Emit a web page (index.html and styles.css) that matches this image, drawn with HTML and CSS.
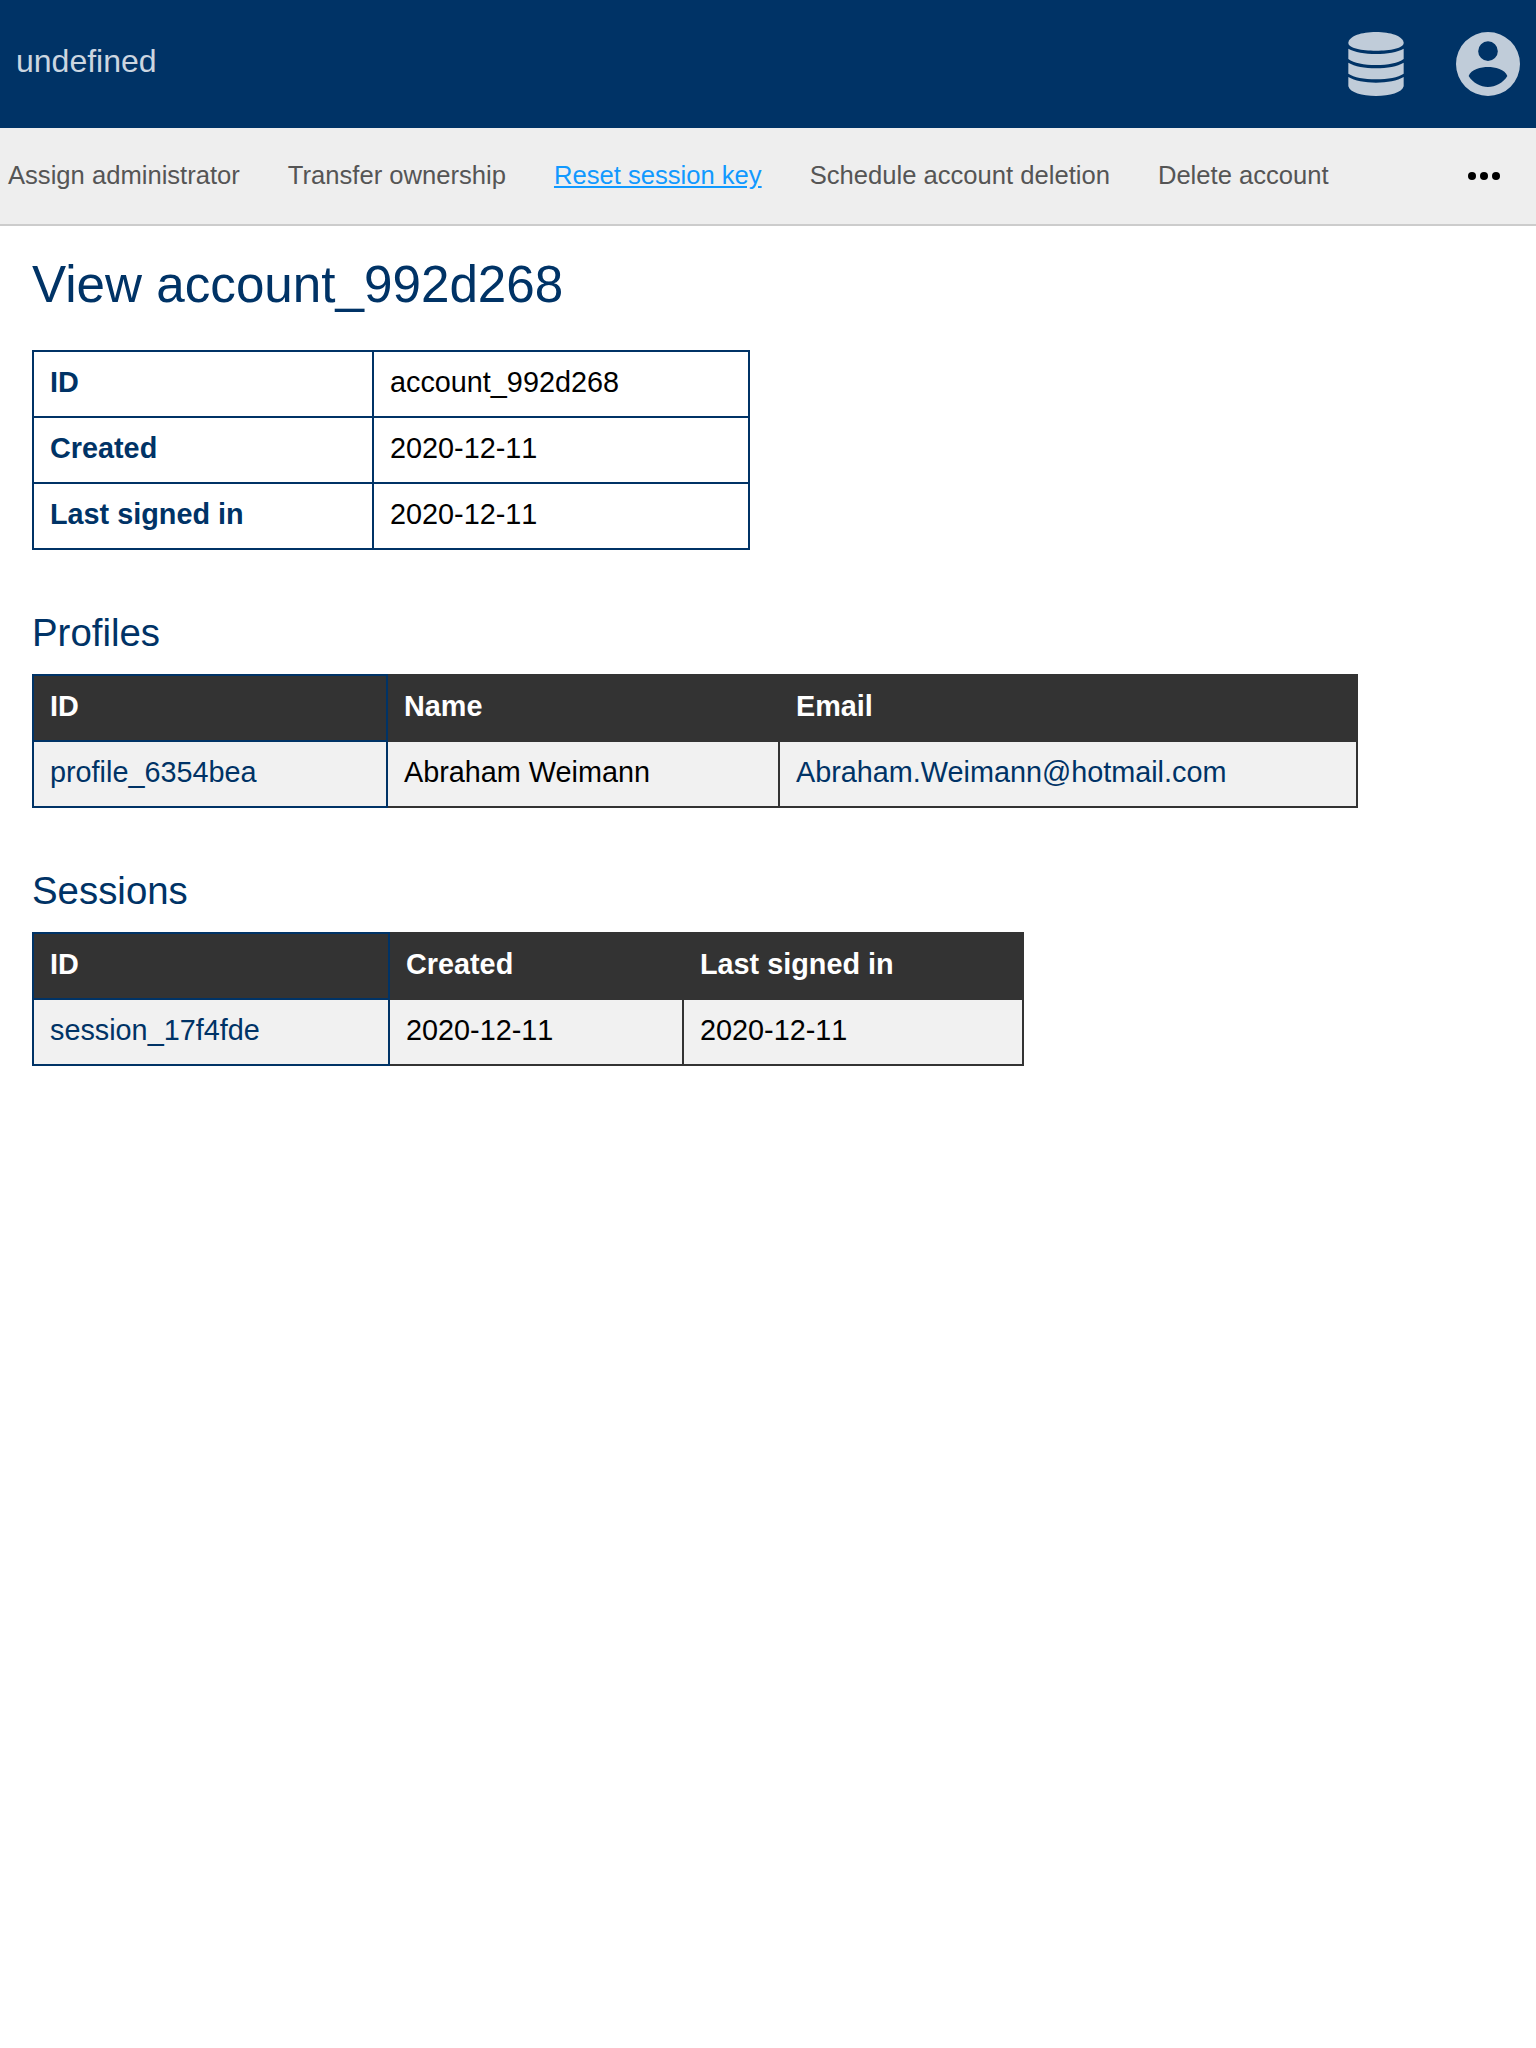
FILE: index.html
```html
<!DOCTYPE html>
<html lang="en">
<head>
<meta charset="utf-8">
<title>View account</title>
<link rel="stylesheet" href="styles.css">
</head>
<body>
<header class="header">
  <a class="brand">undefined</a>
  <div class="menus">
    <svg class="icon-database" viewBox="0 0 168 192">
      <path d="M1 32C4 12 40 0 84 0s80 12 83 32c1 16-41 24-83 24S0 48 1 32z"/>
      <path d="M1 50c19 10 49 16 83 16s64-6 83-16v31c-17 12-47 18-83 18S18 93 1 81z"/>
      <path d="M1 92c19 11 49 17 83 17s64-6 83-17v33c-17 11-47 17-83 17s-66-6-83-17z"/>
      <path d="M1 135c19 11 49 17 83 17s64-6 83-17v28c-5 19-41 29-83 29S6 182 1 163z"/>
    </svg>
    <svg class="icon-user" viewBox="0 0 192 192">
      <path fill-rule="evenodd" d="M96 0a96 96 0 1 0 0 192A96 96 0 1 0 96 0zM96 28a29.500 29.500 0 1 1 0 59 29.500 29.500 0 1 1 0-59zM38 132C44 112 76 105 96 105s52 7 58 27c-12 20-36 33-58 33s-46-13-58-33z"/>
    </svg>
  </div>
</header>
<nav class="navbar">
  <a>Assign administrator</a>
  <a>Transfer ownership</a>
  <a class="current">Reset session key</a>
  <a>Schedule account deletion</a>
  <a>Delete account</a>
  <svg class="more" viewBox="0 0 32 8"><circle cx="4" cy="4" r="4"/><circle cx="16" cy="4" r="4"/><circle cx="28" cy="4" r="4"/></svg>
</nav>
<main class="content">
  <h1>View account_992d268</h1>
  <table class="details">
    <colgroup><col class="w340"><col class="w376"></colgroup>
    <tr><th>ID</th><td>account_992d268</td></tr>
    <tr><th>Created</th><td class="date">2020-12-11</td></tr>
    <tr><th>Last signed in</th><td class="date">2020-12-11</td></tr>
  </table>
  <h2>Profiles</h2>
  <table class="list profiles">
    <colgroup><col class="w354"><col class="w392"><col class="w578"></colgroup>
    <tr><th>ID</th><th>Name</th><th>Email</th></tr>
    <tr><td><a>profile_6354bea</a></td><td>Abraham Weimann</td><td><a>Abraham.Weimann@hotmail.com</a></td></tr>
  </table>
  <h2>Sessions</h2>
  <table class="list sessions">
    <colgroup><col class="w356"><col class="w294"><col class="w340"></colgroup>
    <tr><th>ID</th><th>Created</th><th>Last signed in</th></tr>
    <tr><td><a>session_17f4fde</a></td><td class="date">2020-12-11</td><td class="date">2020-12-11</td></tr>
  </table>
</main>
</body>
</html>
```
FILE: styles.css
```css
* { box-sizing: border-box; }
body {
  margin: 0;
  background: #fff;
  color: #000;
  font-family: "Liberation Sans", Arial, sans-serif;
  font-size: 28.8px;
}
.header {
  display: flex;
  align-items: center;
  justify-content: space-between;
  height: 128px;
  padding: 0 16px;
  background: #036;
}
.brand { padding-bottom: 6px; font-size: 32px; line-height: 36px; color: #ccd6e0; }
.menus { display: flex; gap: 52px; fill: #c0ccd9; }
.icon-database { width: 56px; height: 64px; }
.icon-user { width: 64px; height: 64px; }
.navbar {
  display: flex;
  align-items: center;
  gap: 48px;
  height: 98px;
  padding: 0 36px 0 8px;
  background: #eee;
  border-bottom: 2px solid #ccc;
  font-size: 25.6px;
  line-height: 30px;
  color: #555;
}
.navbar a { padding-bottom: 2px; }
.current { color: #1199ff; text-decoration: underline; }
.more { width: 32px; height: 8px; margin-left: auto; fill: #000; }
.content { padding: 30px 32px; }
h1, h2 { margin: 0; color: #036; font-weight: 400; }
h1 { margin-bottom: 36px; font-size: 51.2px; line-height: 58px; }
h2 { margin: 61px 0 19px; font-size: 38.4px; line-height: 44px; }
table { border-collapse: collapse; table-layout: fixed; }
th, td {
  height: 66px;
  padding: 0 16px 4px;
  border: 2px solid #036;
  text-align: left;
  line-height: 32px;
}
.details { width: 718px; }
.profiles { width: 1326px; }
.sessions { width: 992px; }
.w340 { width: 340px; }
.w376 { width: 376px; }
.w354 { width: 354px; }
.w392 { width: 392px; }
.w578 { width: 578px; }
.w356 { width: 356px; }
.w294 { width: 294px; }
.date { font-kerning: none; }
.details th, .list a { color: #036; }
.list th { background: #333; color: #fff; }
.list td { background: #f1f1f1; }
.list th + th, .list td + td { border-color: #333; }
```
